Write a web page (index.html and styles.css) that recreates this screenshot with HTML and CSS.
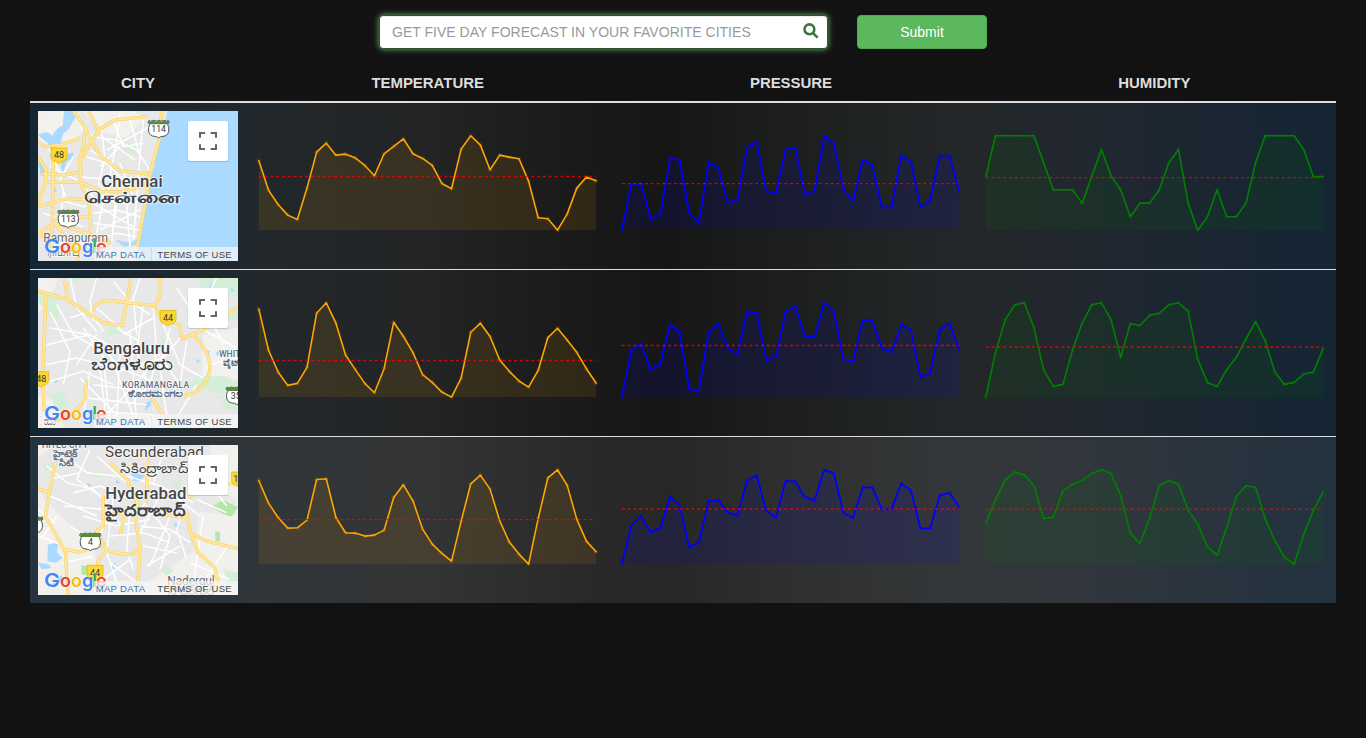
FILE: index.html
```html
<!DOCTYPE html>
<html lang="en">
<head>
<meta charset="utf-8">
<title>Forecast</title>
<link rel="stylesheet" href="styles.css">
</head>
<body>
<svg width="0" height="0" class="defs" aria-hidden="true">
  <defs>
    <g id="map-controls">
      <rect class="m-btn-shadow" x="473" y="65" width="122" height="121" rx="7"/>
      <rect class="m-btn" x="474" y="63" width="120" height="120" rx="6"/>
      <path class="m-full" d="M510 113V99h15M542 99h16v14M558 133v14h-16M525 147h-15v-14"/>
      <g class="m-logo">
        <text x="42" y="459" font-size="58" fill="#4285f4" textLength="48" lengthAdjust="spacingAndGlyphs">G</text>
        <text x="90" y="459" font-size="54" fill="#ea4335">o</text>
        <text x="123" y="459" font-size="54" fill="#fbbc05">o</text>
        <text x="156" y="459" font-size="54" fill="#4285f4">g</text>
        <text x="187" y="459" font-size="54" fill="#34a853">l</text>
        <text x="198" y="459" font-size="54" fill="#ea4335">e</text>
      </g>
      <rect class="m-strip" x="192" y="441" width="172" height="42"/>
      <rect class="m-strip" x="366" y="441" width="258" height="42"/>
      <text class="m-attr m-link" x="197" y="473" textLength="148">MAP DATA</text>
      <text class="m-attr" x="382" y="473" textLength="223">TERMS OF USE</text>
    </g>
    <g id="shield">
      <path class="m-shield" d="M-27 -14q-8 -6 -3 -12q6 4 15 -1q8 5 15 0q7 5 15 0q9 5 15 1q5 6 -3 12q5 8 3 20q-3 14 -17 15q-8 0 -13 5q-5 -5 -13 -5q-14 -1 -17 -15q-2 -12 3 -20z"/>
      <path class="m-shield-top" d="M-28 -15q-4 -5 -1 -10q6 3 14 -1q8 5 15 0q7 5 15 0q8 4 14 1q3 5 -1 10z"/>
    </g>
    <path id="badge" class="m-badge" d="M-24 -20h48v26q0 10 -9 13l-15 7l-15 -7q-9 -3 -9 -13z"/>
  </defs>
</svg>

<form class="search">
  <div class="search-box">
    <input class="search-input" type="text" placeholder="GET FIVE DAY FORECAST IN YOUR FAVORITE CITIES">
    <svg class="search-icon" viewBox="0 0 16 16"><circle cx="6.4" cy="6.3" r="4.9"/><path d="M9.8 9.8l4.8 4.8"/></svg>
  </div>
  <button class="submit" type="button">Submit</button>
</form>

<div class="table">
  <div class="row head">
    <div>CITY</div><div>TEMPERATURE</div><div>PRESSURE</div><div>HUMIDITY</div>
  </div>

  <div class="row">
    <svg class="map" viewBox="24 33 600 450">
      <rect x="24" y="33" width="600" height="450" fill="#e8e8e8"/>
      <path fill="#f2f1ee" d="M24 33h110l30 60l-40 30l-100 10zM160 33h150l40 20l-60 60l-80 -20z"/>
      <path class="m-water" d="M412 33H624V483H318L335 375L352 260L373 200L378 150L400 90zM24 105q28 -18 42 4q14 -28 32 -32l4 -44h34q6 22 -8 30q-10 32 -28 36l-10 36l-28 14l-10 -20zM24 184l16 4l4 42l-12 -6zM100 164l32 -6l-8 20l-14 6l-12 34l-6 -20zM256 420l50 8l20 -14l-4 20l-40 6zM70 260l12 14l-16 4z"/>
      <path fill="#f2f1ee" d="M24 50q30 -4 36 14q2 20 -22 34l-14 4z"/>
      <path class="m-park" d="M282 118l36 18v28l-36 -8zM190 78l18 4l-6 14l-14 -4zM300 340l20 4l-10 10zM230 464h30v19h-24z"/>
      <path class="m-minor" d="M150 80l40 30l70 10l60 30l40 60M215 90l10 90l-20 70l50 60l-10 120M250 60l30 80l60 -10M270 40l-10 80l-20 110M300 60l30 110l-10 120M170 170l60 20l40 40l80 10M180 150l90 60M210 200l60 -60M90 300l70 20l60 -20l70 10l60 -10M190 340l70 -10l70 20M190 370l140 20M200 420l60 -20l60 10M220 300l-20 100M260 310l-20 150M290 310l10 130M320 300l-10 120M60 200l80 40l60 60M100 270l-10 130M40 340l120 40M50 440l80 -20l90 40M130 170l-40 70l20 60M190 310l120 70M210 390l120 -60M340 60l-10 100M230 150l130 -70M150 230l90 10M215 110l100 70M270 190l40 100M250 250l-40 50M50 130l40 90"/>
      <path class="m-road-edge" d="M130 33l35 50l-4 50l-13 50l6 32l-50 10l-68 -4M165 86l44 80l60 46l86 10M209 90L180 130L150 190L152 250L176 300L182 380L165 440M255 60L205 90L175 33M255 60L350 50M395 33L390 110L360 222L348 300L322 440M24 125l20 15l50 -6l56 -20M24 170l25 40l-3 40l-22 60M70 180l-4 260l-42 -45M50 247h105l60 28h60l70 -18M24 320l90 -25l62 5M24 400l50 -30l70 20l100 40M74 370l60 80l12 33M76 355l100 -5"/>
      <path class="m-road" d="M130 33l35 50l-4 50l-13 50l6 32l-50 10l-68 -4M165 86l44 80l60 46l86 10M209 90L180 130L150 190L152 250L176 300L182 380L165 440M255 60L205 90L175 33M255 60L350 50M395 33L390 110L360 222L348 300L322 440M24 125l20 15l50 -6l56 -20M24 170l25 40l-3 40l-22 60M70 180l-4 260l-42 -45M50 247h105l60 28h60l70 -18M24 320l90 -25l62 5M24 400l50 -30l70 20l100 40M74 370l60 80l12 33M76 355l100 -5"/>
      <use href="#badge" x="87" y="164"/><text class="m-num m-num-big" x="87" y="175">48</text>
      <use href="#shield" x="386" y="88"/><text class="m-num" x="386" y="97">114</text>
      <use href="#shield" x="115" y="357"/><text class="m-num" x="115" y="366">113</text>
      <text class="m-city" x="214" y="262" textLength="184">Chennai</text>
      <text class="m-local" x="162" y="309" textLength="291" lengthAdjust="spacingAndGlyphs">சென்னை</text>
      <text class="m-town" x="40" y="427" textLength="194">Ramapuram</text>
      <text class="m-town" x="50" y="468" textLength="100" lengthAdjust="spacingAndGlyphs">ராமாபு</text>
      <use href="#map-controls"/>
    </svg>
    <svg class="chart chart-temp" data-series="chennai.temperature"></svg>
    <svg class="chart chart-pressure" data-series="chennai.pressure"></svg>
    <svg class="chart chart-humidity" data-series="chennai.humidity"></svg>
  </div>

  <div class="row">
    <svg class="map" viewBox="24 30 600 450">
      <rect x="24" y="30" width="600" height="450" fill="#e8e8e8"/>
      <path fill="#f2f1ee" d="M24 30h60l-20 60l-40 50zM520 200l104 -20v150l-60 40l-50 -20zM24 380l50 20l30 80h-80z"/>
      <path class="m-park" d="M500 30h124v50l-60 20l-40 -20zM24 70l50 20l20 40l-20 30l-50 -60zM230 180l40 -6l4 20l-36 10zM500 325h90l34 20v30h-60l-40 -10l-50 -10zM560 380l64 20v30l-40 -10zM60 380l40 -8l20 40l-40 20zM580 150l44 -20v30zM390 200l30 20l-24 10zM110 30h50l-20 14zM400 440l60 10v30h-50z"/>
      <path class="m-water" d="M346 405l20 -10l-6 20l-14 14zM262 92l8 12l-8 4zM526 245l14 4l-6 14zM556 254l12 -6l-4 18zM540 45l10 16h-12zM520 440l18 4l-10 14zM75 330l10 10l-12 6zM490 365l10 10l-14 4zM600 60l14 4l-6 8zM500 270l10 10l-10 6z"/>
      <path class="m-minor" d="M80 110l50 90l70 40M120 30l20 90l60 70M200 30l-20 70l10 60M250 40l50 60l60 40M330 30l-20 60l10 110M60 180l120 20l90 50M50 230l130 -30M50 290l90 -20l80 20l110 -10M60 340l100 -30l90 40M180 310l-20 140M220 270l20 200M270 230l-10 240M300 190l20 270M340 110l-20 140l40 120M370 120l10 130l-20 110M420 180l-30 120l20 140M450 210l-50 60l-130 40M200 200l-60 90M120 150l60 -20l40 60M210 230l60 70l100 40M260 180l120 70l70 100M60 130l60 120l-20 100M190 350l160 20M170 390l180 20M180 430l190 10M400 170l50 120l70 40M470 220l-20 130M480 120l-40 -60M510 180l110 60M540 290l80 -20M210 300l20 170M240 260l80 210M150 330l120 120M350 310l-110 120M560 30l-40 80l60 120M280 200l90 -50M160 180l70 100M200 120l70 60M310 400l60 -60M500 350l-60 100"/>
      <path class="m-road-edge" d="M24 68l90 28l105 68l58 8l26 -140M190 132q0 -35 60 -34l54 8l70 6q24 -26 14 -82M374 112l14 32l60 26l8 42l68 -28l100 -66M488 200q60 60 50 110q-10 60 -80 76M48 80l-10 240l4 110M170 333l-4 60l-30 36M365 388l32 50M104 40l10 56M120 430l-40 30"/>
      <path class="m-road" d="M24 68l90 28l105 68l58 8l26 -140M190 132q0 -35 60 -34l54 8l70 6q24 -26 14 -82M374 112l14 32l60 26l8 42l68 -28l100 -66M488 200q60 60 50 110q-10 60 -80 76M48 80l-10 240l4 110M170 333l-4 60l-30 36M365 388l32 50M104 40l10 56M120 430l-40 30"/>
      <use href="#badge" x="414" y="147"/><text class="m-num m-num-big" x="414" y="158">44</text>
      <use href="#badge" x="32" y="331"/><text class="m-num m-num-big" x="34" y="342">48</text>
      <use href="#shield" x="620" y="384"/><text class="m-num" x="617" y="393">35</text>
      <text class="m-city" x="190" y="259" textLength="230">Bengaluru</text>
      <text class="m-local m-local-tall" x="184" y="306" textLength="245" lengthAdjust="spacingAndGlyphs">ಬೆಂಗಳೂರು</text>
      <text class="m-area" x="276" y="361" textLength="202">KORAMANGALA</text>
      <text class="m-area m-area-local" x="294" y="387" textLength="162" lengthAdjust="spacingAndGlyphs">ಕೋರಮಂಗಲ</text>
      <text class="m-area" x="567" y="266">WHIT</text>
      <text class="m-area m-area-local" x="580" y="293">ವೈಟ್</text>
      <text class="m-town" x="22" y="470" textLength="56" lengthAdjust="spacingAndGlyphs">ಂದು</text>
      <use href="#map-controls" y="-3"/>
    </svg>
    <svg class="chart chart-temp" data-series="bengaluru.temperature"></svg>
    <svg class="chart chart-pressure" data-series="bengaluru.pressure"></svg>
    <svg class="chart chart-humidity" data-series="bengaluru.humidity"></svg>
  </div>

  <div class="row row-hover">
    <svg class="map" viewBox="24 27 600 450">
      <rect x="24" y="27" width="600" height="450" fill="#f1f0ec"/>
      <path fill="#e8e8e8" d="M70 27h470l20 120l60 50v40l-110 -10l-20 120l-90 60l-80 50l-110 -30l-20 -90l-60 -60l-90 -90l-50 -90z"/>
      <path class="m-park" d="M40 88l24 -8l10 18l-26 10zM188 104l30 6l-8 16l-20 -6zM426 140l30 -10l-8 30l-20 -4zM390 400l20 -14l20 20l-20 14zM580 400l44 10v40l-30 -10zM300 200l20 -10l6 20z"/>
      <path class="m-park-deep" d="M544 212l36 -20l44 22l-20 28l-24 -8zM556 286l14 2v28h-14zM154 388l38 6l-4 22h-34z"/>
      <path class="m-water" d="M302 112l44 6l-20 18l-16 -2zM54 326l32 -8l-6 30l18 18l-20 14l-26 -4zM24 380l30 4l10 12l-30 4zM428 262l18 2l-4 14zM170 140l16 6l-10 6zM240 392l18 -14l-6 24zM66 446l30 -30l4 20zM576 108l14 6l-8 12zM260 130l10 10l-12 4z"/>
      <path class="m-minor" d="M50 90l60 50l80 20l60 60M90 50l80 60l90 10M60 130l90 -20M180 40l-40 90l70 50M200 60l100 90M130 170l80 -20l90 40M100 210l120 10l60 50M60 180l140 60M160 240l100 30l100 -20M230 250l-30 70M240 300l100 -10l80 30M250 180l-20 170l30 90M300 220l-10 120l20 60M330 270l90 10l60 40M340 330l100 20M350 390l100 -60M350 210l70 90l-30 100M390 180l-60 110M420 240l-60 150M290 120l100 30l100 50M360 120l-20 100M400 50l-30 90M470 180l-30 100l30 90M500 190l90 40M530 130l60 80M240 380l80 60M220 430l80 -60M24 300l80 30M100 380l90 -20M80 240l-40 60M480 380l120 50M520 240l-30 200M420 170l90 70M600 320l-80 120M24 220l50 40M120 270l60 40"/>
      <path class="m-road-edge" d="M76 80l-14 70l-16 90l60 106l8 131M24 158l36 12M106 340l40 8l70 -20M195 280l22 40l14 22l36 10l40 4l22 -24l-12 -80l8 -60M232 340l-28 36l-12 80M272 295l10 -60l-34 -10M330 330l-8 144M290 130l40 90M356 60l-8 140M470 230l12 60l44 24l98 24M482 290l22 60l50 44l12 50M396 236l80 10M240 80l60 60M624 140l-80 14l-70 30M220 180v90l-25 20"/>
      <path class="m-road" d="M76 80l-14 70l-16 90l60 106l8 131M24 158l36 12M106 340l40 8l70 -20M195 280l22 40l14 22l36 10l40 4l22 -24l-12 -80l8 -60M232 340l-28 36l-12 80M272 295l10 -60l-34 -10M330 330l-8 144M290 130l40 90M356 60l-8 140M470 230l12 60l44 24l98 24M482 290l22 60l50 44l12 50M396 236l80 10M240 80l60 60M624 140l-80 14l-70 30M220 180v90l-25 20"/>
      <use href="#shield" x="181" y="318"/><text class="m-num" x="181" y="328">4</text>
      <use href="#shield" x="7" y="269"/>
      <use href="#badge" x="195" y="408"/><text class="m-num m-num-big" x="195" y="419">44</text>
      <use href="#badge" x="629" y="128"/><text class="m-num m-num-big" x="617" y="139">1</text>
      <text class="m-area" x="36" y="37" textLength="138">HITEC CITY</text>
      <text class="m-area m-area-local" x="70" y="62" textLength="72" lengthAdjust="spacingAndGlyphs">హైటెక్</text>
      <text class="m-area m-area-local" x="86" y="90" textLength="44" lengthAdjust="spacingAndGlyphs">సిటీ</text>
      <text class="m-second" x="225" y="64" textLength="297">Secunderabad</text>
      <text class="m-second m-second-local" x="270" y="111" textLength="206" lengthAdjust="spacingAndGlyphs">సికింద్రాబాద్</text>
      <text class="m-city" x="226" y="189" textLength="243">Hyderabad</text>
      <text class="m-local" x="226" y="239" textLength="243" lengthAdjust="spacingAndGlyphs">హైదరాబాద్</text>
      <text class="m-town" x="412" y="448" textLength="142">Nadergul</text>
      <text class="m-town" x="414" y="478" textLength="140" lengthAdjust="spacingAndGlyphs">నాదర్‌గుల్</text>
      <use href="#map-controls" y="-6"/>
    </svg>
    <svg class="chart chart-temp" data-series="hyderabad.temperature"></svg>
    <svg class="chart chart-pressure" data-series="hyderabad.pressure"></svg>
    <svg class="chart chart-humidity" data-series="hyderabad.humidity"></svg>
  </div>
</div>
<script src="charts.js"></script>
</body>
</html>
```
FILE: charts.js
```js
// Samples are depths: the smallest is the peak of the line, the largest its lowest point.
const series = {
  chennai: {
    temperature: { ref: 169, data: [122,210,253,285,298,204,96,69,105,102,113,136,167,101,79,56,101,115,136,190,206,87,47,75,149,105,111,116,183,293,296,330,282,204,171,182] },
    pressure: { ref: 191, data: [330,192,192,296,284,115,121,279,307,129,142,248,239,83,66,214,218,89,82,225,213,48,71,206,244,119,136,262,262,107,124,262,240,107,107,212] },
    humidity: { ref: 172.5, data: [169,47,47,47,47,47,128,209,209,209,249,168,88,168,209,290,249,249,209,128,88,249,330,290,209,290,290,249,128,47,47,47,47,88,169,169] }
  },
  bengaluru: {
    temperature: { ref: 211.5, data: [58,180,246,286,280,232,70,39,100,195,238,280,308,236,97,139,188,254,277,306,321,264,127,100,140,210,244,273,291,241,143,115,150,187,236,279] },
    pressure: { ref: 166.5, data: [321,179,162,238,222,102,127,296,302,127,101,174,193,65,68,212,199,66,48,138,142,39,64,208,213,90,91,173,187,104,120,262,248,119,100,178] },
    humidity: { ref: 171, data: [321,188,90,45,39,114,240,289,283,180,100,45,39,90,202,101,107,76,70,45,39,64,208,277,289,239,202,147,95,152,246,283,277,252,246,176] }
  },
  hyderabad: {
    temperature: { ref: 193.5, data: [76,144,187,219,218,195,73,71,187,233,234,243,240,225,127,89,137,222,267,295,318,198,86,60,102,197,261,297,327,190,68,44,90,192,258,290] },
    pressure: { ref: 161.5, data: [327,211,183,231,219,125,150,277,262,138,135,172,181,77,60,168,187,77,79,126,136,44,54,172,188,97,97,162,162,85,105,220,220,121,113,155] },
    humidity: { ref: 162.5, data: [203,135,75,50,60,92,191,186,108,87,76,55,44,55,121,234,265,190,92,76,87,165,207,275,301,218,124,92,97,191,257,307,327,238,165,111] }
  }
};

const LEFT = 4.83, WIDTH = 337.2, TOP = 24.8, BOTTOM = 119.1;

document.querySelectorAll('.chart').forEach(svg => {
  const [city, metric] = svg.dataset.series.split('.');
  const { ref, data } = series[city][metric];
  const min = Math.min(...data), max = Math.max(...data);
  const y = v => (TOP + (v - min) / (max - min) * (BOTTOM - TOP)).toFixed(2);
  const x = i => (LEFT + i * WIDTH / (data.length - 1)).toFixed(2);
  const pts = data.map((v, i) => `${x(i)},${y(v)}`);
  const end = x(data.length - 1);
  svg.innerHTML =
    `<polygon class="area" points="${LEFT},${BOTTOM} ${pts.join(' ')} ${end},${BOTTOM}"/>` +
    `<polyline class="line" points="${pts.join(' ')}"/>` +
    data.map((v, i) => `<circle class="dot" cx="${x(i)}" cy="${y(v)}" r="2.4"/>`).join('') +
    `<path class="mean" d="M${LEFT} ${y(ref)}H${end}"/>`;
});
```
FILE: styles.css
```css
* { box-sizing: border-box; }

body {
  margin: 0;
  padding: 15px 30px 0;
  min-height: 738px;
  background: #121212;
  color: #ddd;
  font-family: "Liberation Sans", Arial, sans-serif;
  font-size: 14px;
  overflow: hidden;
}

.defs { position: absolute; }

.search {
  display: flex;
  justify-content: center;
  gap: 29px;
  height: 34px;
}

.search-box { position: relative; width: 449px; }

.search-input {
  display: block;
  width: 100%;
  height: 34px;
  padding: 6px 12px;
  border: 1px solid #2b542c;
  border-radius: 4px;
  background: #fff;
  box-shadow: inset 0 1px 1px rgba(0, 0, 0, .075), 0 0 6px #67b168;
  font: 14px "Liberation Sans", Arial, sans-serif;
  letter-spacing: .02px;
}

.search-input::placeholder { color: #999; }

.search-icon {
  position: absolute;
  right: 9px;
  top: 8px;
  width: 16px;
  height: 16px;
  fill: none;
  stroke: #3c763d;
  stroke-width: 2.6;
}

.submit {
  width: 130px;
  height: 34px;
  border: 1px solid #4cae4c;
  border-radius: 4px;
  background: #5cb85c;
  color: #fff;
  font: 14px "Liberation Sans", Arial, sans-serif;
}

.table { margin-top: 15px; }

.row {
  display: grid;
  grid-template-columns: 200px repeat(3, 1fr);
  column-gap: 16px;
  padding: 8px;
  border-top: 1px solid #ddd;
  background: linear-gradient(90deg, #142534, #22282c 17%, #232425 30%, #191919 43%, #161616 49%, #1d1f1e 58%, #242729 71%, #20272f 82%, #142534);
}

.row-hover {
  background: linear-gradient(90deg, #243340, #30363a 17%, #333435 30%, #292929 43%, #272727 49%, #2e2f2e 58%, #34373a 71%, #30363d 82%, #22323f);
}

.head {
  height: 39px;
  padding: 10px 8px 0;
  border-top: 0;
  border-bottom: 2px solid #ddd;
  background: none;
  font-size: 15px;
  font-weight: bold;
  line-height: 18px;
  letter-spacing: -.05px;
  text-align: center;
}

.head + .row { border-top: 0; }

.map { display: block; width: 200px; height: 150px; }

.m-water { fill: #aadaff; }
.m-park { fill: #d5eed8; }
.m-park-deep { fill: #b5e6a8; }
.m-minor { fill: none; stroke: #fff; stroke-width: 4.5; }
.m-road-edge { fill: none; stroke: #f8d36c; stroke-width: 10; stroke-linejoin: round; }
.m-road { fill: none; stroke: #ffe89c; stroke-width: 6; stroke-linejoin: round; }
.m-badge { fill: #fdd835; stroke: #e0b000; stroke-width: 2; }
.m-shield { fill: #fff; stroke: #555; stroke-width: 3; }
.m-shield-top { fill: #558b3c; }

.m-num {
  font: 26px Roboto, sans-serif;
  fill: #333;
  text-anchor: middle;
}

.m-num-big { font-size: 27px; }

.m-city,
.m-local,
.m-area,
.m-town,
.m-second {
  paint-order: stroke;
  stroke: #fff;
  stroke-width: 5px;
  stroke-opacity: .75;
  stroke-linejoin: round;
  fill: #444;
  font-family: Roboto, "Noto Sans", sans-serif;
}

.m-city { font-size: 50px; font-weight: 500; }
.m-local { font-size: 49px; font-weight: 700; }
.m-local-tall { font-size: 54px; }
.m-second { font-size: 46px; }
.m-second-local { font-size: 41px; }
.m-area { font-size: 26px; font-weight: 500; fill: #5f7086; }
.m-area-local { font-size: 29px; font-weight: 700; }
.m-town { font-size: 36px; fill: #666; }

.m-btn { fill: #fff; }
.m-btn-shadow { fill: #000; opacity: .15; }
.m-full { fill: none; stroke: #666; stroke-width: 6; }
.m-logo { font-family: Inter, sans-serif; font-weight: 600; paint-order: stroke; stroke: #fff; stroke-width: 2px; }
.m-strip { fill: #f5f5f5; opacity: .72; }
.m-attr { font: 28.5px "Liberation Sans", Arial, sans-serif; fill: #444; }
.m-link { fill: #337ab7; }

.chart { display: block; width: 100%; height: 150px; }
.chart-temp { color: orange; }
.chart-pressure { color: blue; }
.chart-humidity { color: green; }

.area { fill: currentColor; fill-opacity: .1; }
.line { fill: none; stroke: currentColor; stroke-width: 1.6; stroke-linejoin: round; stroke-linecap: round; }
.chart-pressure .line { stroke-width: 1.8; }
.dot { fill: currentColor; opacity: .12; }
.mean { fill: none; stroke: red; stroke-opacity: .8; stroke-width: 1.4; stroke-dasharray: 2.9 2.9; }
```
